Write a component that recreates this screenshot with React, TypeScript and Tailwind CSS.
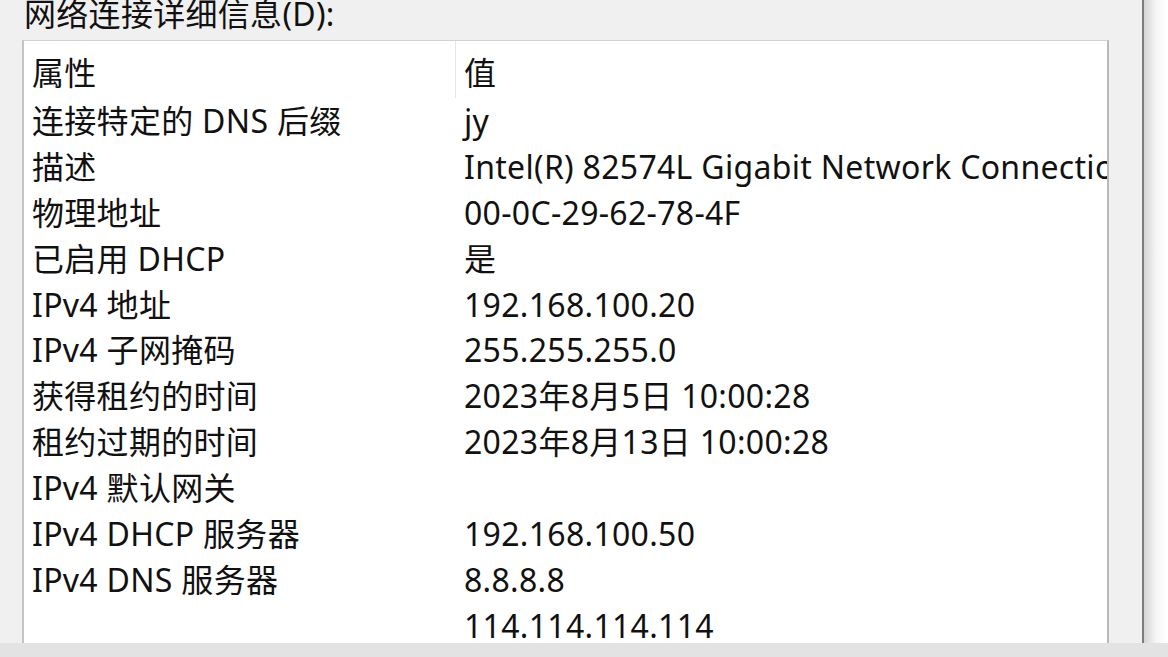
const rows: [string, string][] = [
  ['连接特定的 DNS 后缀', 'jy'],
  ['描述', 'Intel(R) 82574L Gigabit Network Connection'],
  ['物理地址', '00-0C-29-62-78-4F'],
  ['已启用 DHCP', '是'],
  ['IPv4 地址', '192.168.100.20'],
  ['IPv4 子网掩码', '255.255.255.0'],
  ['获得租约的时间', '2023年8月5日 10:00:28'],
  ['租约过期的时间', '2023年8月13日 10:00:28'],
  ['IPv4 默认网关', ''],
  ['IPv4 DHCP 服务器', '192.168.100.50'],
  ['IPv4 DNS 服务器', '8.8.8.8'],
  ['', '114.114.114.114'],
]

export default function App() {
  return (
    <div
      className="w-[1168px] h-[657px] flex flex-col bg-[#f0f0f0] overflow-hidden text-[32px] tracking-[0.3px] text-[#111]"
      style={{ fontFamily: '"Noto Sans", "Noto Sans CJK SC", sans-serif' }}
    >
      <div className="flex h-[643px] overflow-hidden">
        <div className="w-[1142px] shrink-0 pl-[22px] flex flex-col">
          <div className="h-[42px] leading-none pl-[2px] -mt-[2px]">网络连接详细信息(D):</div>
          <div className="w-[1087px] flex-1 bg-white border-t border-[#d2d2d2] border-l-2 border-l-[#c3c3c8] border-r-2 border-r-[#b9b9b9] overflow-hidden whitespace-nowrap">
            <div className="flex h-[57px]">
              <div className="w-[431px] shrink-0 pl-[8px] flex items-center pt-[6px]">属性</div>
              <div className="w-px shrink-0 bg-[#e6e6e6]" />
              <div className="flex-1 pl-[8px] flex items-center pt-[6px]">值</div>
            </div>
            {rows.map(([k, v], i) => (
              <div key={i} className="flex h-[45.9px] items-center">
                <div className="w-[432px] shrink-0 pl-[8px]">{k}</div>
                <div className="flex-1 min-w-0 overflow-hidden pl-[8px]">{v}</div>
              </div>
            ))}
          </div>
        </div>
        <div className="w-[2px] shrink-0 bg-[#7d7d7d]" />
        <div className="flex-1 bg-gradient-to-r from-[#d4d4d4] via-[#f6f6f6] to-white" />
      </div>
      <div className="h-[14px] bg-[#e3e3e3]" />
    </div>
  )
}
